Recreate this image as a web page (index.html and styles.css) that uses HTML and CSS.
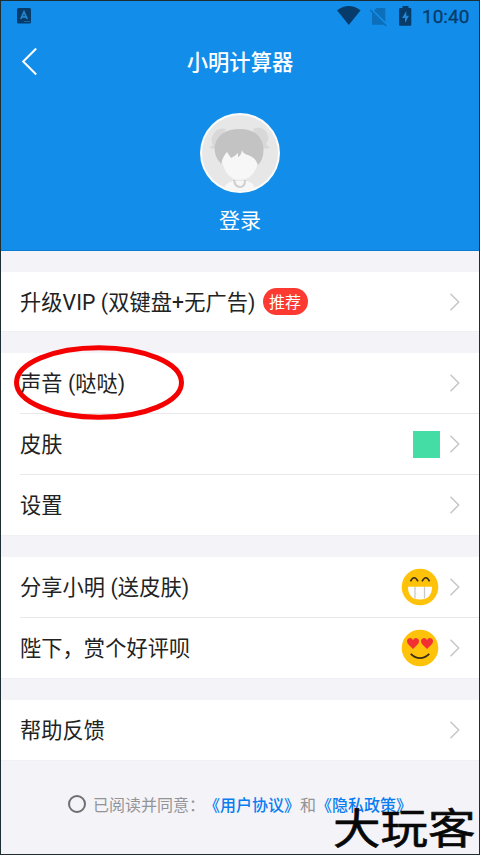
FILE: index.html
```html
<!DOCTYPE html>
<html lang="zh-CN">
<head>
<meta charset="utf-8">
<title>小明计算器</title>
<link rel="stylesheet" href="styles.css">
</head>
<body>
<svg width="0" height="0" class="defs"><defs>
<symbol id="chevron" viewBox="0 0 12 20"><path d="M1.5 1.8 9.7 10 1.5 18.2" fill="none" stroke="#c6c6c9" stroke-width="1.5"/></symbol>
</defs></svg>
<div class="screen">
  <header class="header">
    <div class="status">
      <svg class="app-icon" width="14" height="16" viewBox="0 0 14 16"><rect width="14" height="15.5" rx="1.5" fill="#073b69"/><path d="M3.8 11 7 4 10.2 11M5 8.9H9" fill="none" stroke="#2585cd" stroke-width="1.8"/><path d="M7 13.5H13" stroke="#1765a4"/></svg>
      <svg class="wifi" width="24" height="20" viewBox="0 0 24 20"><path d="M0 4.3Q11.8-4.3 23.6 4.3L11.8 19Z" fill="#073b69"/></svg>
      <svg class="sim" width="18" height="20" viewBox="0 0 18 20"><path d="M6.5 1H14q1.3 0 1.3 1.3V17.8H2V5.5Z" fill="#0d6fb9"/><path d="M.5 2 17 18.5" stroke="#128eea" stroke-width="3"/><path d="M0 2.7 16.3 19" stroke="#0d6fb9" stroke-width="1.5"/></svg>
      <svg class="battery" width="13" height="20" viewBox="0 0 13 20"><path d="M3.5 0H9.5V2H11.2Q12.3 2 12.3 3.1V18.7Q12.3 19.8 11.2 19.8H1.2Q.1 19.8.1 18.7V3.1Q.1 2 1.2 2H3.5Z" fill="#073b69"/><path d="M7.3 5 3 12H6V17L10 9.8H7.3Z" fill="#2189d8"/></svg>
      <span class="time">10:40</span>
    </div>
    <div class="titlebar">
      <svg class="back" width="18" height="30" viewBox="0 0 18 30"><path d="M15.2 1.5 2.2 14.5 15.2 27.5" fill="none" stroke="#fff" stroke-width="2"/></svg>
      <h1>小明计算器</h1>
    </div>
    <div class="profile">
      <svg width="80" height="80" viewBox="0 0 80 80">
        <clipPath id="face"><circle cx="40" cy="40" r="38"/></clipPath>
        <circle cx="40" cy="40" r="40" fill="#fbfbfa"/><circle cx="40" cy="40" r="38" fill="#e7e7e7"/>
        <g clip-path="url(#face)">
          <path d="M24 80Q23 69 34 68H46Q56 69 55 80Z" fill="#f7f7f7"/>
          <path d="M26 16Q17 14 13 22Q10 27 13 32L9 35 16 36Z M53 16Q62 12 67 20Q70 26 66 31L70 35 62 36Z" fill="#d8d8d8"/>
          <path d="M21 42Q24 67 40 67Q57 66 59 42L50 32H29Z" fill="#f7f7f7"/>
          <path d="M21 51Q13 42 15 32Q19 16 40 16Q59 16 63 32Q65 45 58 52Q56 44 45 41Q42 39 42 37Q41 43 38 44V40Q34 44 31 45L27 39Q23 43 21 51Z" fill="#c3c3c3"/>
          <path d="M34 67Q35 74 40 74T45 67" fill="none" stroke="#cfcfcf" stroke-width="2"/>
        </g>
      </svg>
      <span class="login">登录</span>
    </div>
  </header>
  <main>
    <section class="group">
      <div class="row"><span class="label">升级VIP (双键盘+无广告)</span><b class="tag">推荐</b><svg class="chev"><use href="#chevron"/></svg></div>
    </section>
    <section class="group">
      <div class="row"><span class="label">声音 (哒哒)<svg class="ring" width="170" height="75" viewBox="0 0 170 75"><ellipse cx="85" cy="37.5" rx="82.5" ry="34.8" fill="none" stroke="#f50000" stroke-width="5"/></svg></span><svg class="chev"><use href="#chevron"/></svg></div>
      <div class="row"><span class="label">皮肤</span><i class="swatch"></i><svg class="chev"><use href="#chevron"/></svg></div>
      <div class="row"><span class="label">设置</span><svg class="chev"><use href="#chevron"/></svg></div>
    </section>
    <section class="group">
      <div class="row"><span class="label">分享小明 (送皮肤)</span>
        <svg class="emoji" viewBox="0 0 38 38"><circle cx="19" cy="19" r="18.3" fill="#ffc20a"/><path d="M9.5 13.3Q13 6.3 17 13.3M21 13.3Q25 6.3 28.5 13.3" fill="none" stroke="#352a18" stroke-width="1.6"/><path d="M7 18.7H31Q31 31.4 19 31.4T7 18.7Z" fill="#fff"/><path d="M14 19V30.5M23.5 19V30.5" stroke="#c8c8c8" stroke-width="1.3"/></svg>
        <svg class="chev"><use href="#chevron"/></svg></div>
      <div class="row"><span class="label">陛下，赏个好评呗</span>
        <svg class="emoji" viewBox="0 0 38 38"><circle cx="19" cy="19" r="18.3" fill="#ffc20a"/><path d="M12 20 7 15Q4.5 11 8 9.2 10.6 8.4 12 11 13.4 8.4 16 9.2 19.5 11 17 15ZM26 20 21 15Q18.5 11 22 9.2 24.6 8.4 26 11 27.4 8.4 30 9.2 33.5 11 31 15Z" fill="#f23034"/><path d="M9.7 24.8Q19 33.5 28.3 24.8" fill="none" stroke="#352a18" stroke-width="1.7"/></svg>
        <svg class="chev"><use href="#chevron"/></svg></div>
    </section>
    <section class="group">
      <div class="row"><span class="label">帮助反馈</span><svg class="chev"><use href="#chevron"/></svg></div>
    </section>
  </main>
  <footer class="agree"><i class="radio"></i><span class="note">已阅读并同意：</span><b class="terms">《用户协议》</b><span class="and">和</span><b class="privacy">《隐私政策》</b></footer>
  <div class="mark">大玩客</div>
</div>
</body>
</html>
```
FILE: styles.css
```css
* { box-sizing: border-box; }
body { margin: 0; font-family: "Noto Sans CJK SC", sans-serif; color: #222; }
.defs { position: absolute; }
.screen { position: relative; width: 480px; height: 855px; border: 1px solid #1e2d31; background: #f3f3f8; overflow: hidden; }
.header { height: 250px; background: #128eea; border-bottom: 1px solid #0a7bd0; }
.status { height: 30px; display: flex; align-items: flex-start; padding: 5px 10px 0 16px; }
.app-icon { margin-top: 2px; }
.wifi { margin-left: auto; }
.sim { margin-left: 9px; margin-top: 1px; }
.battery { margin-left: 11px; }
.time { margin-left: 10px; font-family: Roboto, sans-serif; font-size: 19px; line-height: 22px; font-weight: 400; -webkit-text-stroke: .3px #073b69; color: #073b69; width: 47px; white-space: nowrap; }
.titlebar { height: 60px; display: grid; grid-template-columns: 60px 1fr 60px; align-items: center; }
.back { margin-left: 20px; margin-top: 1px; }
h1 { margin: 0; text-align: center; font-size: 21.3px; font-weight: 500; color: #fff; line-height: 30px; }
.profile { display: flex; flex-direction: column; align-items: center; padding-top: 22px; }
.login { margin-top: 11px; font-size: 21px; line-height: 30px; color: #fff; }
.group { margin-top: 21px; background: #fff; padding-left: 19px; }
.row { height: 61px; display: flex; align-items: center; padding-right: 18px; font-size: 21.2px; border-bottom: 1px solid #e8e8ec; white-space: nowrap; }
.group .row:last-child { border-color: #f0f0f4; margin-left: -19px; padding-left: 19px; }
.group:first-child .row { height: 60px; }
.label { position: relative; line-height: 30px; padding-top: 2px; font-family: Roboto, "Noto Sans CJK SC", sans-serif; letter-spacing: .1px; }
.chev { width: 12px; height: 20px; margin-left: auto; flex: none; }
.tag { margin-left: 7px; width: 45px; height: 27px; border-radius: 14px; background: #fd3a32; color: #fff; font-size: 16px; line-height: 26px; font-weight: 400; text-align: center; }
.ring { position: absolute; left: -6px; top: -22px; }
.swatch { width: 27px; height: 27px; background: #44dda5; margin-left: auto; }
.emoji { width: 38px; height: 38px; margin-left: auto; }
.swatch + .chev { margin-left: 9px; }
.emoji + .chev { margin-left: 10px; }
.agree { height: 86px; display: flex; align-items: center; padding-left: 67px; font-size: 16px; white-space: nowrap; color: #949496; }
.radio { width: 18px; height: 18px; border: 2px solid #6f6f71; border-radius: 50%; margin-right: 7px; }
.note { width: 111px; }
.agree b { font-weight: 500; color: #0a7df0; }
.mark { position: absolute; left: 332px; top: 796px; font: 400 47.5px/58px "Noto Sans CJK SC", sans-serif; color: #080808; -webkit-text-stroke: .7px #080808; white-space: nowrap; transform: scaleY(.88); }
```
